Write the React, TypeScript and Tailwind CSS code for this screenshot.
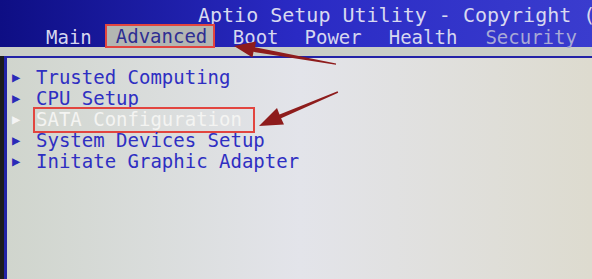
import React from "react";

const tabs = [
  { label: "Main", ml: "ml-[46px]" },
  { label: "Boot", ml: "ml-[18px]" },
  { label: "Power", ml: "ml-[26px]" },
  { label: "Health", ml: "ml-[27px]" },
  { label: "Security", ml: "ml-[28px]" },
];

const items = [
  "Trusted Computing",
  "CPU Setup",
  "SATA Configuration",
  "System Devices Setup",
  "Initate Graphic Adapter",
];

function Tab({ label, ml, dim }: { label: string; ml: string; dim?: boolean }) {
  return (
    <span className={`${ml} ${dim ? "text-[#a9aad6]" : "text-[#d6d7ef]"}`}>
      {label}
    </span>
  );
}

export default function App() {
  return (
    <div
      className="relative w-[592px] h-[279px] overflow-hidden bg-[#d9dcd8]"
      style={{ fontFamily: '"DejaVu Sans Mono", "Liberation Mono", monospace' }}
    >
      <div className="h-[47px] bg-gradient-to-r from-[#0e0e84] via-[#2a2ac4] to-[#3a3cce] flex flex-col">
        <div className="h-[28px] flex items-center pl-[198px] text-[20px] text-[#d8d9f0] whitespace-nowrap pt-[2px] overflow-hidden">
          Aptio Setup Utility - Copyright (
        </div>
        <div className="flex items-center h-[19px] text-[19px] whitespace-nowrap">
          <Tab label="Main" ml="ml-[46px]" />
          <span className="ml-[13px] w-[110px] h-[24px] -mt-[3px] flex items-center pl-[9px] bg-[#b3b6b2] border-2 border-[#e2453f] text-[#2e2e92]">
            Advanced
          </span>
          {tabs.slice(1).map((t) => (
            <Tab key={t.label} label={t.label} ml={t.ml} dim={t.label === "Security"} />
          ))}
        </div>
      </div>
      <div className="h-[9px] bg-[#c9cdc6]" />
      <div className="flex h-[223px]">
        <div className="w-[4px] bg-[#1c1c1c]" />
        <div className="flex-1 border-l-[3px] border-t-2 border-[#2222a6] bg-gradient-to-r from-[#d0d5cd] via-[#e3e4ea] to-[#dddbcf] pt-[9px]">
          {items.map((item) => {
            const active = item === "SATA Configuration";
            return (
              <div key={item} className="flex items-center h-[21px] text-[19px] whitespace-nowrap">
                <span
                  className={`ml-[5px] w-[24px] text-[14px] ${active ? "text-[#f4f4f4]" : "text-[#2a2ab8]"}`}
                >
                  ▶
                </span>
                {active ? (
                  <span className="-ml-[3px] h-[26px] flex items-center pl-[1px] pr-[11px] border-2 border-[#e2453f] text-[#f4f4f2]">
                    {item}
                  </span>
                ) : (
                  <span className="text-[#2f2fc2]">{item}</span>
                )}
              </div>
            );
          })}
        </div>
      </div>
      <svg className="absolute left-0 top-0" width="592" height="279" viewBox="0 0 592 279">
        <polygon
          fill="#8e1c1c"
          points="234,46 256,41.5 255,47.3 336.1,63.5 335.9,64.8 253.5,51.8 252.5,57.5"
        />
        <polygon
          fill="#8e1c1c"
          points="259,126 284,124.5 281.1,118.2 338.2,92.8 337.6,91.3 279.5,114.6 277,108"
        />
      </svg>
    </div>
  );
}
